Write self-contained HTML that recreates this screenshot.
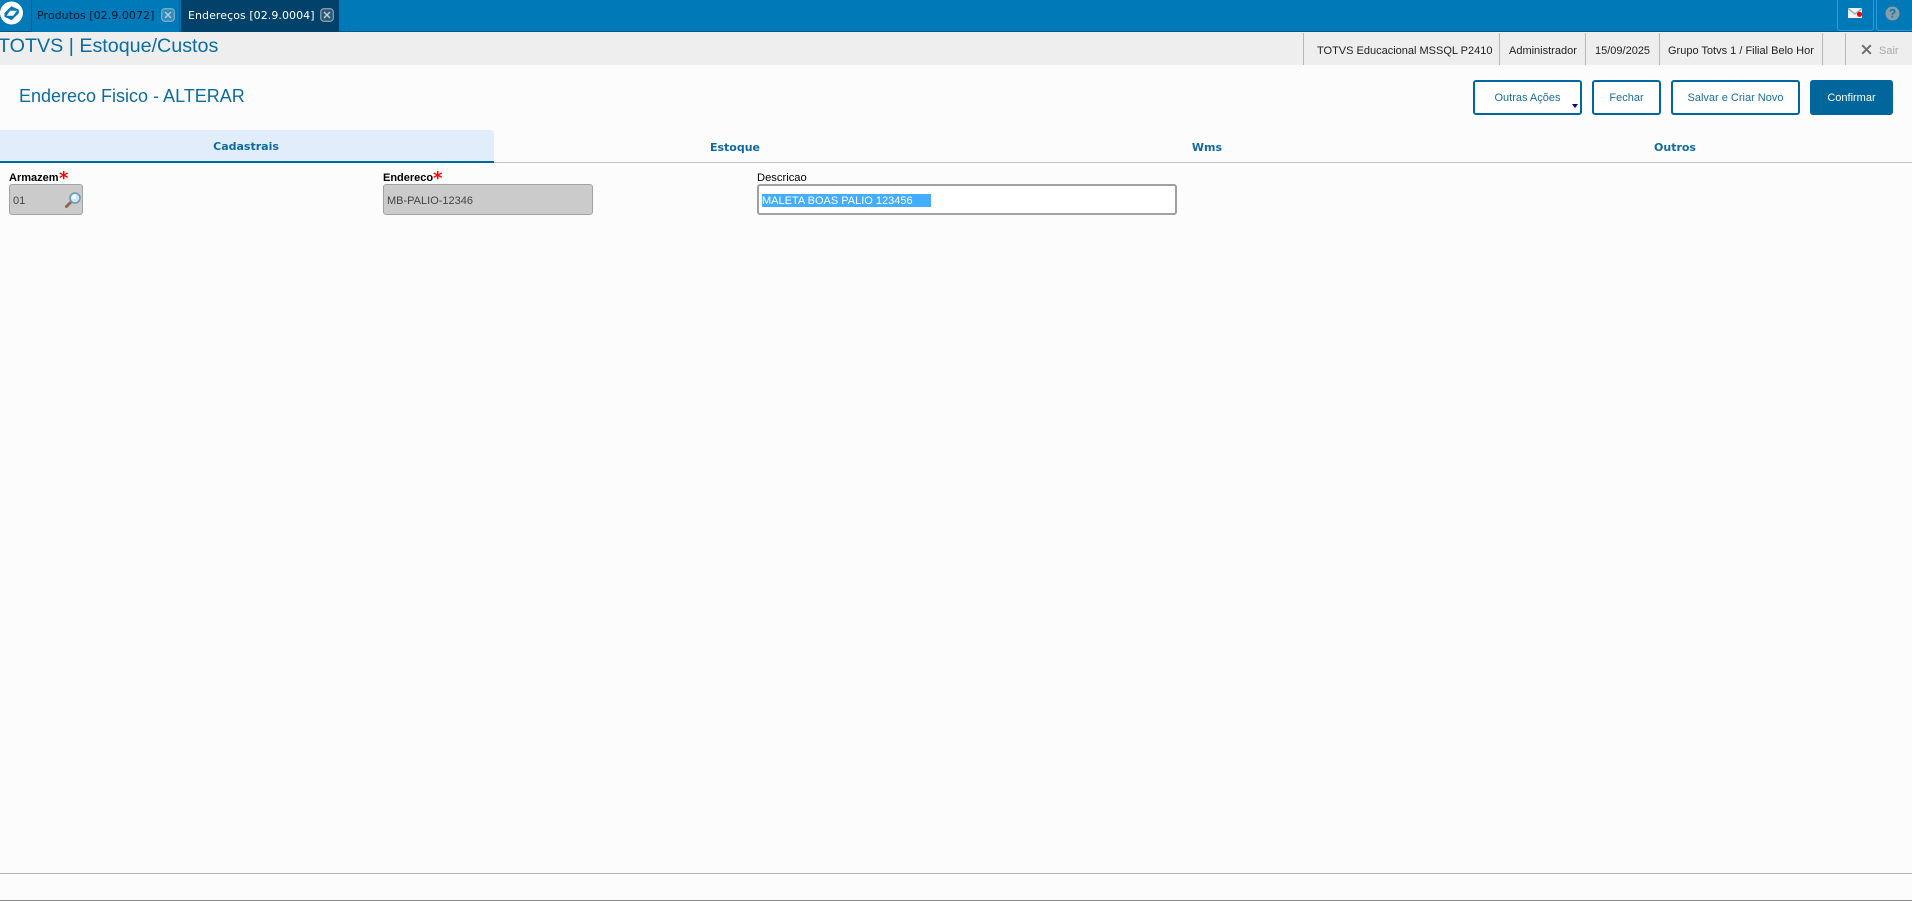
<!DOCTYPE html>
<html lang="pt-BR"><head><meta charset="utf-8"><title>TOTVS</title>
<style>
html,body{margin:0;padding:0;width:1912px;height:901px;overflow:hidden;background:#fcfcfc}
body{position:relative;font-family:"Liberation Sans",sans-serif}
.a{position:absolute;white-space:nowrap}
.tab{font:11px/1 "DejaVu Sans",sans-serif;top:10px;letter-spacing:.06px}
.sep{position:absolute;top:33px;height:32px;width:1px;background:#b8b8b8}
.top{top:44px;font-size:11px;line-height:14px;color:#222}
.btn{position:absolute;top:80px;height:35px;box-sizing:border-box;border:2px solid #00669c;border-radius:3px;background:#fff;color:#1a6d9f;font-size:11px;line-height:33px;text-align:center}
.pt{top:142px;font:bold 11px/12px "DejaVu Sans",sans-serif;color:#0f6a9d;transform:translateX(-50%)}
.lbl{top:171px;font-size:11px;line-height:14px;color:#000}
.ro{top:184px;height:31px;background:#cbcbcb;border:1px solid #a3a3a3;border-radius:3px;box-sizing:border-box;position:absolute}
.val{top:194px;font-size:11px;line-height:14px;color:#444}
.star{top:170px;font:bold 18px/18px "DejaVu Sans",sans-serif;color:#f00}
</style></head><body>
<div class="a" style="left:0;top:0;width:1912px;height:32px;background:#0079b8;border-bottom:1px solid #045a86;box-sizing:border-box"></div>
<svg class="a" style="left:0;top:0" width="26" height="28" viewBox="0 0 26 28"><circle cx="11.500" cy="13" r="11.500" fill="#fff"/><path d="M5 13.200 L11.500 6.800 L18.300 10 L18.300 13 L11.500 19.600 L5 16.400 Z" fill="#0079b8" stroke="#0079b8" stroke-linejoin="round"/><path d="M10 10.800 L17 10.800 L13.200 15.800 L6.600 15.800 Z" fill="#fff"/></svg>

<div class="a" style="left:31px;top:0;width:149px;height:32px;box-sizing:border-box;background:#0079b8;border:1px solid #045f90;border-bottom:0;border-top:0"></div>
<div class="a tab" style="left:37px;color:#001a2e">Produtos [02.9.0072]</div>
<svg class="a" style="left:161px;top:8px" width="14" height="14" viewBox="0 0 14 14"><rect x=".75" y=".75" width="12.500" height="12.500" rx="3" fill="#2f8abb" stroke="#86b3cb" stroke-width="1.200"/><path d="M4 4l6 6M10 4l-6 6" stroke="#b9d0dd" stroke-width="1.400"/></svg>

<div class="a" style="left:181px;top:0;width:158px;height:32px;background:#02416a;border-radius:0 0 2px 2px"></div>
<div class="a tab" style="left:188px;color:#fff">Endereços [02.9.0004]</div>
<svg class="a" style="left:320px;top:8px" width="14" height="14" viewBox="0 0 14 14"><rect x=".75" y=".75" width="12.500" height="12.500" rx="3" fill="#2a5876" stroke="#8da6b6" stroke-width="1.200"/><path d="M4 4l6 6M10 4l-6 6" stroke="#c4d2db" stroke-width="1.400"/></svg>

<div class="a" style="left:1837px;top:0;width:37px;height:31px;box-sizing:border-box;border:1px solid #2b9be0;border-top:0;border-radius:0 0 3px 3px"></div>
<div class="a" style="left:1876px;top:0;width:37px;height:31px;box-sizing:border-box;border:1px solid #2b9be0;border-top:0;border-radius:0 0 3px 3px"></div>
<svg class="a" style="left:1848px;top:7px" width="16" height="14" viewBox="0 0 16 14"><rect x="0" y="1" width="14" height="10" fill="#f3f3f3"/><path d="M0 1.500L7 7l7-5.500" fill="none" stroke="#7fb2cf" stroke-width="1.400"/><circle cx="11.500" cy="7.300" r="2.600" fill="#f00"/></svg>
<svg class="a" style="left:1885px;top:6px" width="15" height="15" viewBox="0 0 15 15"><circle cx="7.500" cy="7.500" r="7" fill="#8c9ca6"/><text x="7.500" y="11.600" text-anchor="middle" font-family="Liberation Sans" font-weight="bold" font-size="12" fill="#0079b8">?</text></svg>

<div class="a" style="left:0;top:32px;width:1912px;height:33px;background:#eee"></div>
<div class="a" style="left:-2px;top:34px;font-size:19.700px;line-height:24px;color:#0c6b9f">TOTVS | Estoque/Custos</div>
<div class="sep" style="left:1303px"></div>
<div class="sep" style="left:1499px"></div>
<div class="sep" style="left:1585px"></div>
<div class="sep" style="left:1659px"></div>
<div class="sep" style="left:1822px"></div>
<div class="sep" style="left:1845px"></div>
<div class="a top" style="left:1317px">TOTVS Educacional MSSQL P2410</div>
<div class="a top" style="left:1509px">Administrador</div>
<div class="a top" style="left:1595px">15/09/2025</div>
<div class="a top" style="left:1668px">Grupo Totvs 1 / Filial Belo Hor</div>
<svg class="a" style="left:1861px;top:44px" width="11" height="11" viewBox="0 0 11 11"><path d="M1.200 1.200l8.600 8.600M9.800 1.200l-8.600 8.600" stroke="#6f6f6f" stroke-width="2"/></svg>
<div class="a top" style="left:1879px;color:#aaa">Sair</div>

<div class="a" style="left:19px;top:85px;font-size:18px;line-height:22px;color:#0c6b9f">Endereco Fisico - ALTERAR</div>

<div class="btn" style="left:1473px;width:109px">Outras Ações</div>
<div class="a" style="left:1572px;top:104px;width:0;height:0;border-left:3.500px solid transparent;border-right:3.500px solid transparent;border-top:4px solid #00008b"></div>
<div class="btn" style="left:1592px;width:69px">Fechar</div>
<div class="btn" style="left:1671px;width:129px">Salvar e Criar Novo</div>
<div class="btn" style="left:1810px;width:83px;background:#00669c;color:#fff">Confirmar</div>

<div class="a" style="left:0;top:130px;width:494px;height:31px;background:#e1edfa;border-radius:0 4px 0 0"></div>
<div class="a" style="left:0;top:161px;width:494px;height:2px;background:#00669c"></div>
<div class="a" style="left:494px;top:162px;width:1418px;height:1px;background:#c4c4c4"></div>
<div class="a pt" style="left:246px;top:141px">Cadastrais</div>
<div class="a pt" style="left:735px">Estoque</div>
<div class="a pt" style="left:1207px">Wms</div>
<div class="a pt" style="left:1675px">Outros</div>

<div class="a lbl" style="left:9px;font-weight:bold">Armazem</div>
<div class="a star" style="left:59px">*</div>
<div class="ro" style="left:9px;width:74px"></div>
<div class="a val" style="left:13px">01</div>
<svg class="a" style="left:64px;top:191px" width="18" height="18" viewBox="0 0 18 18"><path d="M7 11L2.500 15.500" stroke="#8a6a4c" stroke-width="3" stroke-linecap="round"/><circle cx="11" cy="7" r="5" fill="#cfe6f6" stroke="#6d9ab8" stroke-width="1.600"/><circle cx="10" cy="6" r="2" fill="#fff"/></svg>

<div class="a lbl" style="left:383px;font-weight:bold">Endereco</div>
<div class="a star" style="left:433px">*</div>
<div class="ro" style="left:383px;width:210px"></div>
<div class="a val" style="left:387px">MB-PALIO-12346</div>

<div class="a lbl" style="left:757px;font-size:11.200px">Descricao</div>
<div class="a" style="left:757px;top:184px;width:420px;height:31px;box-sizing:border-box;background:#fff;border:2px solid #a0a0a0;border-radius:3px"></div>
<div class="a" style="left:762px;top:194px;width:169px;height:13px;background:#43adff"></div>
<div class="a val" style="left:762px;color:#fff">MALETA BOAS PALIO 123456</div>

<div class="a" style="left:0;top:873px;width:1912px;height:1px;background:#b5b5b5"></div>
<div class="a" style="left:0;top:900px;width:1912px;height:1px;background:#8a8a8a"></div>
</body></html>
